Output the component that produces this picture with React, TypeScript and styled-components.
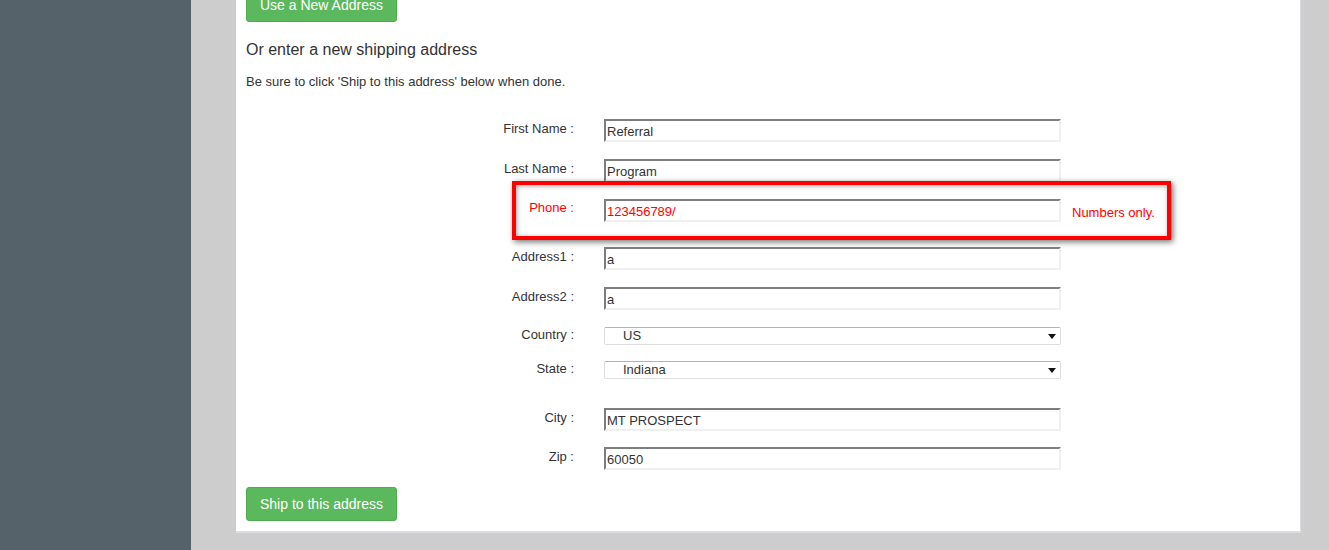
import React from 'react'
import styled, { createGlobalStyle } from 'styled-components'

const GlobalStyle = createGlobalStyle`
  html, body {
    margin: 0;
    padding: 0;
    height: 550px;
    overflow: hidden;
    background: #cdcdcd;
    font-family: "Liberation Sans", Arial, sans-serif;
    color: #333;
  }
`

const Page = styled.div`
  display: flex;
  height: 550px;
`

const Sidebar = styled.div`
  width: 191px;
  flex-shrink: 0;
  background: #56626a;
`

const Main = styled.div`
  flex: 1;
  padding: 0 28px 0 45px;
`

const Card = styled.div`
  width: 1065px;
  margin-top: -12px;
  background: #fff;
  border-right: 1px solid #dcdce2;
  border-bottom: 2px solid #dcdce2;
  padding: 0 10px 10px 10px;
  box-sizing: border-box;
`

const GreenButton = styled.button`
  display: inline-block;
  background: #5cb85c;
  border: 1px solid #4cae4c;
  border-radius: 3px;
  color: #fff;
  font-family: "Liberation Sans", Arial, sans-serif;
  font-size: 14px;
  height: 34px;
  padding: 0 13px;
  line-height: 32px;
  cursor: pointer;
`

const Heading = styled.h3`
  margin: 19px 0 0 0;
  font-size: 16px;
  font-weight: normal;
  line-height: 18px;
  color: #333;
`

const Hint = styled.p`
  margin: 15px 0 0 0;
  font-size: 13px;
  line-height: 15px;
  color: #333;
`

const Form = styled.div`
  margin-top: 30px;
  display: flex;
  flex-direction: column;
`

const Row = styled.div<{ space: number }>`
  position: relative;
  display: grid;
  grid-template-columns: 328px 457px auto;
  column-gap: 30px;
  align-items: start;
  margin-bottom: ${p => p.space}px;
`

const Label = styled.label<{ error?: boolean; offset?: number }>`
  text-align: right;
  font-size: 13px;
  line-height: 15px;
  padding-top: ${p => p.offset ?? (p.error ? 1 : 2)}px;
  color: ${p => (p.error ? '#ff0000' : '#333')};
  white-space: pre;
`

const TextInput = styled.input<{ error?: boolean }>`
  box-sizing: border-box;
  width: 457px;
  height: 23px;
  margin: 0;
  padding: 2px 1px 0;
  border-top: 2px solid #7d7d7d;
  border-left: 2px solid #7d7d7d;
  border-right: 2px solid #f0f0f0;
  border-bottom: 2px solid #f0f0f0;
  font-family: "Liberation Sans", Arial, sans-serif;
  font-size: 13px;
  color: ${p => (p.error ? '#ff0000' : '#333')};
  background: #fff;
  outline: none;
`

const SelectWrap = styled.div`
  position: relative;
  width: 457px;
  height: 18px;
`

const Select = styled.select`
  box-sizing: border-box;
  width: 457px;
  height: 18px;
  margin: 0;
  padding: 0 0 0 18px;
  appearance: none;
  border: 1px solid #dedede;
  border-top-color: #b4b4b4;
  border-radius: 2px;
  background: #fff;
  font-family: "Liberation Sans", Arial, sans-serif;
  font-size: 13px;
  line-height: 16px;
  color: #333;
  outline: none;
`

const Caret = styled.svg`
  position: absolute;
  right: 5px;
  top: 8px;
  pointer-events: none;
`

const ErrorText = styled.span`
  margin-left: -19px;
  padding-top: 6px;
  font-size: 13px;
  line-height: 15px;
  color: #ff0000;
`

const Highlight = styled.div`
  position: absolute;
  left: 266px;
  top: -18px;
  width: 659px;
  height: 59px;
  box-sizing: border-box;
  border: 4px solid #ff0000;
  box-shadow: 2px 2px 6px rgba(0, 0, 0, 0.55), inset 1px 1px 5px rgba(0, 0, 0, 0.35);
  pointer-events: none;
`

const BottomBar = styled.div`
  margin-top: 0;
`

function Dropdown({ value }: { value: string }) {
  return (
    <SelectWrap>
      <Select defaultValue={value}>
        <option>{value}</option>
      </Select>
      <Caret width="8" height="5" viewBox="0 0 8 5">
        <path d="M0 0h8L4 5z" fill="#111" />
      </Caret>
    </SelectWrap>
  )
}

export default function App() {
  return (
    <>
      <GlobalStyle />
      <Page>
        <Sidebar />
        <Main>
          <Card>
            <GreenButton>Use a New Address</GreenButton>
            <Heading>Or enter a new shipping address</Heading>
            <Hint>Be sure to click 'Ship to this address' below when done.</Hint>

            <Form>
              <Row space={17}>
                <Label>First Name :</Label>
                <TextInput defaultValue="Referral" />
              </Row>
              <Row space={17}>
                <Label>Last Name :</Label>
                <TextInput defaultValue="Program" />
              </Row>
              <Row space={25}>
                <Label error>Phone :</Label>
                <TextInput error defaultValue="123456789/" />
                <ErrorText>Numbers only.</ErrorText>
                <Highlight />
              </Row>
              <Row space={17}>
                <Label>Address1 :</Label>
                <TextInput defaultValue="a" />
              </Row>
              <Row space={16}>
                <Label>Address2 :</Label>
                <TextInput defaultValue="a" />
              </Row>
              <Row space={16}>
                <Label offset={1}>Country :</Label>
                <Dropdown value="US" />
              </Row>
              <Row space={30}>
                <Label offset={1}>State :</Label>
                <Dropdown value="Indiana" />
              </Row>
              <Row space={16}>
                <Label>City :</Label>
                <TextInput defaultValue="MT PROSPECT" />
              </Row>
              <Row space={17}>
                <Label>Zip :</Label>
                <TextInput defaultValue="60050" />
              </Row>
            </Form>

            <BottomBar>
              <GreenButton>Ship to this address</GreenButton>
            </BottomBar>
          </Card>
        </Main>
      </Page>
    </>
  )
}
